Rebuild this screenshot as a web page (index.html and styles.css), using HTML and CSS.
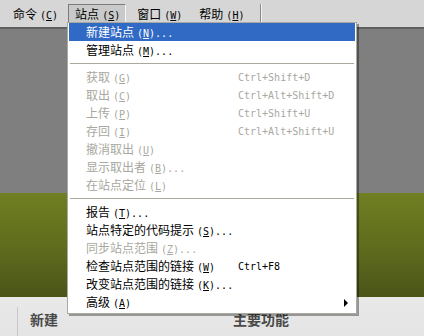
FILE: index.html
```html
<!DOCTYPE html>
<html>
<head>
  <meta charset="utf-8" />
  <title>站点菜单</title>
  <link rel="stylesheet" href="styles.css">
</head>
<body>
  <!-- Menu bar across the top -->
  <div class="menubar">
    <span class="menu-title">命令<span class="acc">(<u>C</u>)</span></span>
    <span class="menu-title pressed">站点<span class="acc">(<u>S</u>)</span></span>
    <span class="menu-title">窗口<span class="acc">(<u>W</u>)</span></span>
    <span class="menu-title">帮助<span class="acc">(<u>H</u>)</span></span>
    <span class="menubar-sep"></span>
  </div>

  <div class="workspace"></div>
  <div class="banner"></div>

  <div class="bottom">
    <div class="bottom-rule"></div>
    <div class="bottom-col first">新建</div>
    <div class="bottom-col second">主要功能</div>
  </div>

  <!-- The open dropdown of 站点 -->
  <div class="dropdown">
    <div class="item active"><span>新建站点<span class="acc">(<u>N</u>)...</span></span></div>
    <div class="item"><span>管理站点<span class="acc">(<u>M</u>)...</span></span></div>
    <div class="sep"></div>
    <div class="item disabled"><span>获取<span class="acc">(<u>G</u>)</span></span><span class="key">Ctrl+Shift+D</span></div>
    <div class="item disabled"><span>取出<span class="acc">(<u>C</u>)</span></span><span class="key">Ctrl+Alt+Shift+D</span></div>
    <div class="item disabled"><span>上传<span class="acc">(<u>P</u>)</span></span><span class="key">Ctrl+Shift+U</span></div>
    <div class="item disabled"><span>存回<span class="acc">(<u>I</u>)</span></span><span class="key">Ctrl+Alt+Shift+U</span></div>
    <div class="item disabled"><span>撤消取出<span class="acc">(<u>U</u>)</span></span></div>
    <div class="item disabled"><span>显示取出者<span class="acc">(<u>B</u>)...</span></span></div>
    <div class="item disabled"><span>在站点定位<span class="acc">(<u>L</u>)</span></span></div>
    <div class="sep"></div>
    <div class="item"><span>报告<span class="acc">(<u>T</u>)...</span></span></div>
    <div class="item"><span>站点特定的代码提示<span class="acc">(<u>S</u>)...</span></span></div>
    <div class="item disabled"><span>同步站点范围<span class="acc">(<u>Z</u>)...</span></span></div>
    <div class="item"><span>检查站点范围的链接<span class="acc">(<u>W</u>)</span></span><span class="key">Ctrl+F8</span></div>
    <div class="item"><span>改变站点范围的链接<span class="acc">(<u>K</u>)...</span></span></div>
    <div class="item"><span>高级<span class="acc">(<u>A</u>)</span></span><span></span><span class="arrow"></span></div>
  </div>
</body>
</html>
```

FILE: styles.css
```css
/* Dreamweaver-like window with the 站点 menu dropped down */

html, body {
  margin: 0;
  padding: 0;
}

body {
  width: 424px;
  height: 336px;
  overflow: hidden;
  position: relative;
  font-family: "Noto Sans CJK SC", "DejaVu Sans", sans-serif;
  font-size: 12px;
  color: #000;
  background: #7f7f7f;
}

.acc {
  font-family: "DejaVu Sans Mono", monospace;
  font-size: 10px;
  margin-left: 3px;
}

/* top menu bar */
.menubar {
  height: 27px;
  background: #d6d6d6;
  border-bottom: 2px solid #5f5f5f;
  display: flex;
  align-items: center;
  padding-left: 6px;
  gap: 4px;
  box-sizing: content-box;
}

.menu-title {
  height: 18px;
  line-height: 18px;
  padding: 0 5px 0 6px;
  border: 1px solid transparent;
  white-space: nowrap;
}

.menu-title.pressed {
  background: #c9c9c9;
  border-color: #7a7a7a #f4f4f4 #f4f4f4 #7a7a7a;
}

.menubar-sep {
  width: 1px;
  height: 20px;
  background: #8a8a8a;
  border-right: 1px solid #f2f2f2;
  margin-left: 6px;
}

.workspace {
  height: 164px;
  background: #7f7f7f;
}

.banner {
  height: 104px;
  background: linear-gradient(180deg, #707f22 0%, #5e6b1d 55%, #4a5418 100%);
}

.bottom {
  height: 39px;
  background: linear-gradient(180deg, #e9e9e9, #e4e4e4);
  display: flex;
  align-items: flex-end;
}

.bottom-rule {
  width: 1px;
  height: 29px;
  background: #c8c8c8;
  margin-left: 17px;
}

.bottom-col {
  font-size: 14px;
  font-weight: bold;
  color: #4a4a4a;
  line-height: 18px;
  margin-bottom: 8px;
}

.bottom-col.first {
  margin-left: 12px;
}

.bottom-col.second {
  margin-left: 175px;
}

/* dropdown menu, lying over the page */
.dropdown {
  position: absolute;
  left: 67px;
  top: 22px;
  width: 286px;
  padding: 0 1px 2px 1px;
  background: #fff;
  border: 1px solid #a9a9a0;
  box-shadow: 2px 2px 0 rgba(0, 0, 0, 0.35);
}

.item {
  height: 18px;
  line-height: 18px;
  padding-left: 17px;
  display: grid;
  grid-template-columns: 152px 1fr auto;
  align-items: center;
  white-space: nowrap;
}

.item.active {
  background: #316ac5;
  color: #fff;
}

.item.disabled {
  color: #a8a8a0;
}

.key {
  font-family: "DejaVu Sans Mono", monospace;
  font-size: 10px;
}

.arrow {
  width: 0;
  height: 0;
  border-left: 4px solid #000;
  border-top: 4px solid transparent;
  border-bottom: 4px solid transparent;
  margin-right: 7px;
}

.sep {
  height: 1px;
  margin: 4px 1px;
  background: #aca899;
}
```
